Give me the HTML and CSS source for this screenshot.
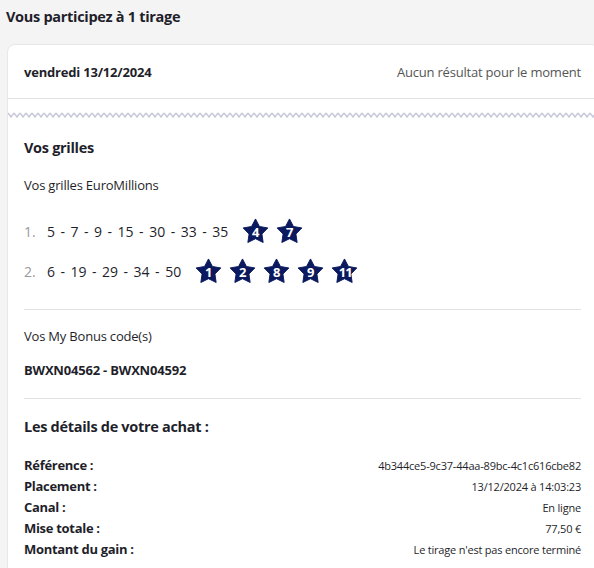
FILE: index.html
```html
<!DOCTYPE html>
<html lang="fr">
<head>
<meta charset="utf-8">
<link rel="stylesheet" href="styles.css">
</head>
<body>
<h1 class="title">Vous participez à 1 tirage</h1>
<div class="card">
  <div class="card-head">
    <span class="date">vendredi 13/12/2024</span>
    <span class="status">Aucun résultat pour le moment</span>
  </div>
  <svg class="zigzag" width="100%" height="8" aria-hidden="true">
    <defs>
      <pattern id="zz" width="6" height="8" patternUnits="userSpaceOnUse">
        <polyline points="0,2 3,6 6,2" fill="none" stroke="#c9c9dc" stroke-width="1.6"/>
      </pattern>
    </defs>
    <rect width="100%" height="8" fill="url(#zz)"/>
  </svg>
  <div class="body">
    <h2 class="section-title grilles-title">Vos grilles</h2>
    <p class="sub">Vos grilles EuroMillions</p>
    <div class="grid-row">
      <span class="idx">1.</span>
      <span class="nums">5<i>-</i>7<i>-</i>9<i>-</i>15<i>-</i>30<i>-</i>33<i>-</i>35</span>
      <span class="stars">
        <span class="star"><svg viewBox="0 0 28 27"><path d="M14 1 L18.11 8.84 L26.84 10.33 L20.66 16.66 L21.94 25.42 L14 21.5 L6.06 25.42 L7.34 16.66 L1.16 10.33 L9.89 8.84 Z"/></svg><b>4</b></span>
        <span class="star"><svg viewBox="0 0 28 27"><path d="M14 1 L18.11 8.84 L26.84 10.33 L20.66 16.66 L21.94 25.42 L14 21.5 L6.06 25.42 L7.34 16.66 L1.16 10.33 L9.89 8.84 Z"/></svg><b>7</b></span>
      </span>
    </div>
    <div class="grid-row">
      <span class="idx">2.</span>
      <span class="nums">6<i>-</i>19<i>-</i>29<i>-</i>34<i>-</i>50</span>
      <span class="stars">
        <span class="star"><svg viewBox="0 0 28 27"><path d="M14 1 L18.11 8.84 L26.84 10.33 L20.66 16.66 L21.94 25.42 L14 21.5 L6.06 25.42 L7.34 16.66 L1.16 10.33 L9.89 8.84 Z"/></svg><b>1</b></span>
        <span class="star"><svg viewBox="0 0 28 27"><path d="M14 1 L18.11 8.84 L26.84 10.33 L20.66 16.66 L21.94 25.42 L14 21.5 L6.06 25.42 L7.34 16.66 L1.16 10.33 L9.89 8.84 Z"/></svg><b>2</b></span>
        <span class="star"><svg viewBox="0 0 28 27"><path d="M14 1 L18.11 8.84 L26.84 10.33 L20.66 16.66 L21.94 25.42 L14 21.5 L6.06 25.42 L7.34 16.66 L1.16 10.33 L9.89 8.84 Z"/></svg><b>8</b></span>
        <span class="star"><svg viewBox="0 0 28 27"><path d="M14 1 L18.11 8.84 L26.84 10.33 L20.66 16.66 L21.94 25.42 L14 21.5 L6.06 25.42 L7.34 16.66 L1.16 10.33 L9.89 8.84 Z"/></svg><b>9</b></span>
        <span class="star"><svg viewBox="0 0 28 27"><path d="M14 1 L18.11 8.84 L26.84 10.33 L20.66 16.66 L21.94 25.42 L14 21.5 L6.06 25.42 L7.34 16.66 L1.16 10.33 L9.89 8.84 Z"/></svg><b class="two">11</b></span>
      </span>
    </div>
    <hr class="sep sep-1">
    <p class="sub bonus-label">Vos My Bonus code(s)</p>
    <p class="codes">BWXN04562 - BWXN04592</p>
    <hr class="sep sep-2">
    <h2 class="section-title details-title">Les détails de votre achat :</h2>
    <dl class="details">
      <dt>Référence :</dt><dd>4b344ce5-9c37-44aa-89bc-4c1c616cbe82</dd>
      <dt>Placement :</dt><dd>13/12/2024 à 14:03:23</dd>
      <dt>Canal :</dt><dd>En ligne</dd>
      <dt>Mise totale :</dt><dd>77,50 €</dd>
      <dt>Montant du gain :</dt><dd>Le tirage n'est pas encore terminé</dd>
    </dl>
  </div>
</div>
</body>
</html>
```
FILE: styles.css
```css
* { box-sizing: border-box; }
html, body { margin: 0; padding: 0; }
body {
  background: #f4f4f4;
  font-family: "Open Sans", "Liberation Sans", sans-serif;
  font-stretch: 90%;
  color: #1f1f2b;
  font-size: 13px;
  letter-spacing: -0.2px;
  overflow: hidden;
  height: 568px;
}
.title {
  margin: 0;
  padding: 7px 6px 0;
  height: 44px;
  font-size: 14.5px;
  font-weight: 700;
  line-height: 20px;
  letter-spacing: -0.3px;
}
.card {
  margin: 0 -5px 0 7px;
  padding-bottom: 40px;
  background: #fff;
  border: 1px solid #e8e8e8;
  border-radius: 8px;
  overflow: hidden;
}
.card-head {
  display: flex;
  justify-content: space-between;
  align-items: center;
  height: 54px;
  padding: 0 17px 0 16px;
  border-bottom: 1px solid #e3e3e3;
}
.date { font-weight: 700; }
.status { color: #555; }
.zigzag { display: block; margin-top: 12px; }
.body { padding: 0 17px 0 16px; }
.section-title {
  margin: 18px 0 0;
  font-size: 14.5px;
  font-weight: 700;
  line-height: 20px;
  letter-spacing: -0.3px;
}
.grilles-title { margin-top: 19px; }
.sub { margin: 17px 0 0; line-height: 20px; }
.grid-row {
  display: flex;
  align-items: center;
  height: 28px;
  margin-top: 22px;
  font-size: 14px;
  letter-spacing: 0;
}
.grid-row + .grid-row { margin-top: 12px; }
.idx { color: #9a9a9a; width: 23px; }
.nums { margin-right: 14px; }
.nums i { font-style: normal; margin: 0 5.5px; }
.stars { display: flex; gap: 7px; }
.star {
  position: relative;
  width: 27px;
  height: 26px;
  display: flex;
  align-items: center;
  justify-content: center;
}
.star svg {
  position: absolute; left: 0; top: 0; width: 100%; height: 100%;
  fill: #0b1a5e; stroke: #0b1a5e; stroke-width: 1; stroke-linejoin: round;
}
.star b { position: relative; color: #fff; font-size: 13px; font-weight: 700; top: 1.5px; line-height: 1; }
.star b.two { letter-spacing: -1px; margin-right: -1px; }
.sep { border: 0; border-top: 1px solid #e3e3e3; margin: 0; }
.sep-1 { margin-top: 24px; }
.bonus-label { margin-top: 16px; }
.codes { margin: 14px 0 0; font-weight: 700; line-height: 20px; }
.sep-2 { margin-top: 18px; }
.details {
  display: grid;
  grid-template-columns: auto 1fr;
  margin: 18px 0 0;
  line-height: 21px;
}
.details dt { font-weight: 700; letter-spacing: -0.3px; }
.details dd { margin: 0; text-align: right; font-size: 11px; letter-spacing: -0.2px; }
```
